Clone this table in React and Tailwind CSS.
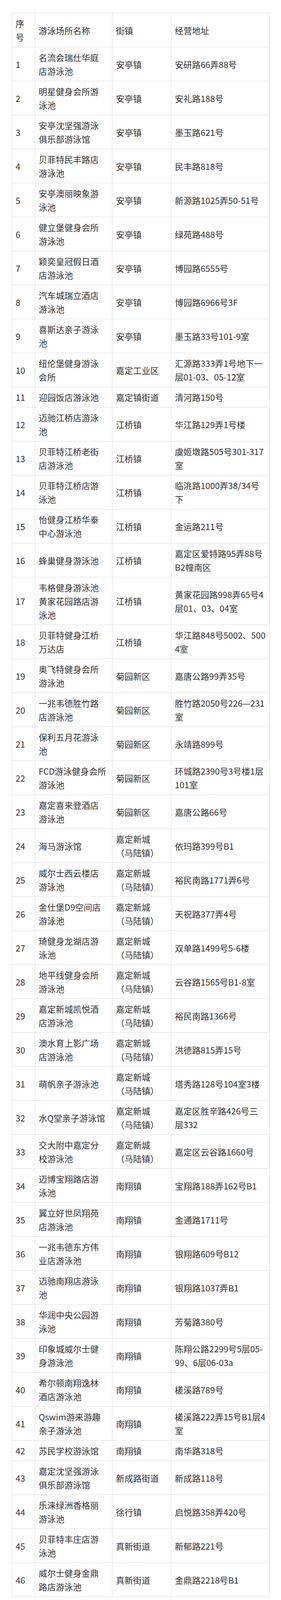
const XC = "嘉定新城\n（马陆镇）";

// [序号, 名称, 街镇, 地址] — line breaks follow the source table
const rows = [
    ["1", "名流会瑞仕华庭\n店游泳池", "安亭镇", "安研路66弄88号"],
    ["2", "明星健身会所游\n泳池", "安亭镇", "安礼路188号"],
    ["3", "安亭沈坚强游泳\n俱乐部游泳馆", "安亭镇", "墨玉路621号"],
    ["4", "贝菲特民丰路店\n游泳池", "安亭镇", "民丰路818号"],
    ["5", "安亭澳丽映象游\n泳池", "安亭镇", "新源路1025弄50-51号"],
    ["6", "健立堡健身会所\n游泳池", "安亭镇", "绿苑路488号"],
    ["7", "颖奕皇冠假日酒\n店游泳池", "安亭镇", "博园路6555号"],
    ["8", "汽车城瑞立酒店\n游泳池", "安亭镇", "博园路6966号3F"],
    ["9", "喜斯达亲子游泳\n池", "安亭镇", "墨玉路33号101-9室"],
    ["10", "纽伦堡健身游泳\n会所", "嘉定工业区", "汇源路333弄1号地下一\n层01-03、05-12室"],
    ["11", "迎园饭店游泳池", "嘉定镇街道", "清河路150号"],
    ["12", "迈驰江桥店游泳\n池", "江桥镇", "华江路129弄1号楼"],
    ["13", "贝菲特江桥老街\n店游泳池", "江桥镇", "虞姬墩路505号301-317\n室"],
    ["14", "贝菲特江桥店游\n泳池", "江桥镇", "临洮路1000弄38/34号\n下"],
    ["15", "怡健身江桥华泰\n中心游泳池", "江桥镇", "金运路211号"],
    ["16", "蜂巢健身游泳池", "江桥镇", "嘉定区爱特路95弄88号\nB2幢南区"],
    ["17", "韦格健身游泳池\n黄家花园路店游\n泳池", "江桥镇", "黄家花园路998弄65号4\n层01、03、04室"],
    ["18", "贝菲特健身江桥\n万达店", "江桥镇", "华江路848号5002、500\n4室"],
    ["19", "奥飞特健身会所\n游泳池", "菊园新区", "嘉唐公路99弄35号"],
    ["20", "一兆韦德胜竹路\n店游泳池", "菊园新区", "胜竹路2050号226—231\n室"],
    ["21", "保利五月花游泳\n池", "菊园新区", "永靖路899号"],
    ["22", "FCD游泳健身会所\n游泳池", "菊园新区", "环城路2390号3号楼1层\n101室"],
    ["23", "嘉定喜来登酒店\n游泳池", "菊园新区", "嘉唐公路66号"],
    ["24", "海马游泳馆", XC, "依玛路399号B1"],
    ["25", "威尔士西云楼店\n游泳池", XC, "裕民南路1771弄6号"],
    ["26", "金仕堡D9空间店\n游泳池", XC, "天祝路377弄4号"],
    ["27", "琦健身龙湖店游\n泳池", XC, "双单路1499号5-6楼"],
    ["28", "地平线健身会所\n游泳池", XC, "云谷路1565号B1-8室"],
    ["29", "嘉定新城凯悦酒\n店游泳池", XC, "裕民南路1366号"],
    ["30", "澳水育上影广场\n店游泳池", XC, "洪德路815弄15号"],
    ["31", "萌帆亲子游泳池", XC, "塔秀路128号104室3楼"],
    ["32", "水Q堂亲子游泳馆", XC, "嘉定区胜辛路426号三\n层332"],
    ["33", "交大附中嘉定分\n校游泳池", XC, "嘉定区云谷路1660号"],
    ["34", "迈博宝翔路店游\n泳池", "南翔镇", "宝翔路188弄162号B1"],
    ["35", "翼立好世凤翔苑\n店游泳池", "南翔镇", "金通路1711号"],
    ["36", "一兆韦德东方伟\n业店游泳池", "南翔镇", "银翔路609号B12"],
    ["37", "迈驰南翔店游泳\n池", "南翔镇", "银翔路1037弄B1"],
    ["38", "华润中央公园游\n泳池", "南翔镇", "芳菊路380号"],
    ["39", "印象城威尔士健\n身游泳池", "南翔镇", "陈翔公路2299号5层05-\n99、6层06-03a"],
    ["40", "希尔顿南翔逸林\n酒店游泳池", "南翔镇", "槎溪路789号"],
    ["41", "Qswim游来游趣\n亲子游泳池", "南翔镇", "槎溪路222弄15号B1层4\n室"],
    ["42", "苏民学校游泳馆", "南翔镇", "南华路318号"],
    ["43", "嘉定沈坚强游泳\n俱乐部游泳馆", "新成路街道", "新成路118号"],
    ["44", "乐涞绿洲香格丽\n游泳池", "徐行镇", "启悦路358弄420号"],
    ["45", "贝菲特丰庄店游\n泳池", "真新街道", "新郁路221号"],
    ["46", "威尔士健身金鼎\n路店游泳池", "真新街道", "金鼎路2218号B1"],
];

const cell = "border border-[#dedede] px-[9px] py-2 align-middle whitespace-pre text-left font-normal";

const App = () => {
    return (
        <div
            className="min-h-[4108px] bg-white pt-[33px] px-[30px] text-[#333] text-[22px] leading-[35px]"
            style={{fontFamily: '"Noto Sans CJK SC", "Noto Sans", sans-serif'}}
        >
            <table className="w-[660px] table-fixed border-collapse">
                <colgroup>
                    <col className="w-[59px]"/>
                    <col className="w-[198px]"/>
                    <col className="w-[151px]"/>
                    <col className="w-[252px]"/>
                </colgroup>
                <thead>
                    <tr>
                        <th className={cell}>{"序\n号"}</th>
                        <th className={cell}>游泳场所名称</th>
                        <th className={cell}>街镇</th>
                        <th className={cell}>经营地址</th>
                    </tr>
                </thead>
                <tbody>
                    {rows.map(([no, name, town, addr]) => (
                        <tr key={no}>
                            <td className={cell}>{no}</td>
                            <td className={cell}>{name}</td>
                            <td className={cell}>{town}</td>
                            <td className={cell}>{addr}</td>
                        </tr>
                    ))}
                </tbody>
            </table>
        </div>
    );
};

export default App;
